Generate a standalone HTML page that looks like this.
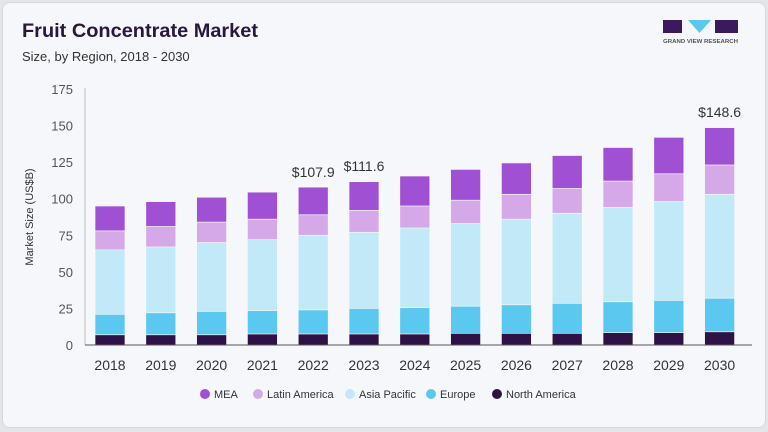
<!DOCTYPE html>
<html><head><meta charset="utf-8"><style>
body{margin:0;background:#e3e5e8;font-family:"Liberation Sans",sans-serif;}
#c{position:absolute;left:2px;top:2px;width:762px;height:424px;background:#f5f7fa;border:1px solid #d5d8dc;border-radius:8px;}
.a{fill:#a050d2}.b{fill:#d5a9e8}.p{fill:#c2e9f8}.e{fill:#5bc8f0}.n{fill:#2e1245}
rect.s{stroke:#f5f7fa;stroke-width:0.7}
.yl{font-size:13px;fill:#555;text-anchor:end}
.xl{font-size:14px;fill:#333;text-anchor:middle}
</style></head><body>
<div id="c"></div>
<svg width="768" height="432" style="position:absolute;left:0;top:0" xmlns="http://www.w3.org/2000/svg">
<text x="22" y="37" font-size="19" font-weight="bold" fill="#2a1640" textLength="236" lengthAdjust="spacingAndGlyphs">Fruit Concentrate Market</text>
<text x="22" y="61" font-size="13" fill="#333">Size, by Region, 2018 - 2030</text>
<rect x="663" y="20" width="19" height="13" fill="#3a1a5c"/>
<polygon points="688,20 711,20 699.5,33" fill="#5bc8f0"/>
<rect x="715" y="20" width="23" height="13" fill="#3a1a5c"/>
<text x="700.5" y="43" font-size="5" font-weight="bold" fill="#555" text-anchor="middle" textLength="75" lengthAdjust="spacingAndGlyphs">GRAND VIEW RESEARCH</text>
<text transform="translate(33,217) rotate(-90)" font-size="11" fill="#333" text-anchor="middle">Market Size (US$B)</text>
<text class="yl" x="73" y="350">0</text><text class="yl" x="73" y="313.4">25</text><text class="yl" x="73" y="276.8">50</text><text class="yl" x="73" y="240.3">75</text><text class="yl" x="73" y="203.7">100</text><text class="yl" x="73" y="167.1">125</text><text class="yl" x="73" y="130.5">150</text><text class="yl" x="73" y="94">175</text>
<line x1="85" y1="88" x2="85" y2="345" stroke="#bbb"/>

<g transform="translate(95,0)"><rect class="a s" y="206.0" width="30" height="139"/><rect class="b s" y="230.9" width="30" height="114.1"/><rect class="p s" y="249.9" width="30" height="95.1"/><rect class="e s" y="314.3" width="30" height="30.7"/><rect class="n s" y="334.8" width="30" height="10.2"/></g>
<g transform="translate(145.8,0)"><rect class="a s" y="201.6" width="30" height="143.4"/><rect class="b s" y="226.5" width="30" height="118.5"/><rect class="p s" y="247.0" width="30" height="98"/><rect class="e s" y="312.8" width="30" height="32.2"/><rect class="n s" y="334.8" width="30" height="10.2"/></g>
<g transform="translate(196.6,0)"><rect class="a s" y="197.2" width="30" height="147.8"/><rect class="b s" y="222.1" width="30" height="122.9"/><rect class="p s" y="242.6" width="30" height="102.4"/><rect class="e s" y="311.4" width="30" height="33.6"/><rect class="n s" y="334.8" width="30" height="10.2"/></g>
<g transform="translate(247.4,0)"><rect class="a s" y="192.1" width="30" height="152.9"/><rect class="b s" y="219.2" width="30" height="125.8"/><rect class="p s" y="239.7" width="30" height="105.3"/><rect class="e s" y="310.6" width="30" height="34.4"/><rect class="n s" y="334.0" width="30" height="11"/></g>
<g transform="translate(298.2,0)"><rect class="a s" y="187.1" width="30" height="157.9"/><rect class="b s" y="214.8" width="30" height="130.2"/><rect class="p s" y="235.3" width="30" height="109.7"/><rect class="e s" y="309.9" width="30" height="35.1"/><rect class="n s" y="334.0" width="30" height="11"/></g>
<g transform="translate(349,0)"><rect class="a s" y="181.7" width="30" height="163.3"/><rect class="b s" y="210.4" width="30" height="134.6"/><rect class="p s" y="232.3" width="30" height="112.7"/><rect class="e s" y="308.4" width="30" height="36.6"/><rect class="n s" y="334.0" width="30" height="11"/></g>
<g transform="translate(399.8,0)"><rect class="a s" y="176.0" width="30" height="169"/><rect class="b s" y="206.0" width="30" height="139"/><rect class="p s" y="228.0" width="30" height="117"/><rect class="e s" y="307.7" width="30" height="37.3"/><rect class="n s" y="334.0" width="30" height="11"/></g>
<g transform="translate(450.6,0)"><rect class="a s" y="169.4" width="30" height="175.6"/><rect class="b s" y="200.2" width="30" height="144.8"/><rect class="p s" y="223.6" width="30" height="121.4"/><rect class="e s" y="306.2" width="30" height="38.8"/><rect class="n s" y="333.3" width="30" height="11.7"/></g>
<g transform="translate(501.4,0)"><rect class="a s" y="162.9" width="30" height="182.1"/><rect class="b s" y="194.3" width="30" height="150.7"/><rect class="p s" y="219.2" width="30" height="125.8"/><rect class="e s" y="304.8" width="30" height="40.2"/><rect class="n s" y="333.3" width="30" height="11.7"/></g>
<g transform="translate(552.2,0)"><rect class="a s" y="155.5" width="30" height="189.5"/><rect class="b s" y="188.5" width="30" height="156.5"/><rect class="p s" y="213.3" width="30" height="131.7"/><rect class="e s" y="303.3" width="30" height="41.7"/><rect class="n s" y="333.3" width="30" height="11.7"/></g>
<g transform="translate(603,0)"><rect class="a s" y="147.5" width="30" height="197.5"/><rect class="b s" y="181.1" width="30" height="163.9"/><rect class="p s" y="207.5" width="30" height="137.5"/><rect class="e s" y="301.8" width="30" height="43.2"/><rect class="n s" y="332.6" width="30" height="12.4"/></g>
<g transform="translate(653.8,0)"><rect class="a s" y="137.3" width="30" height="207.7"/><rect class="b s" y="173.8" width="30" height="171.2"/><rect class="p s" y="201.6" width="30" height="143.4"/><rect class="e s" y="300.4" width="30" height="44.6"/><rect class="n s" y="332.6" width="30" height="12.4"/></g>
<g transform="translate(704.6,0)"><rect class="a s" y="127.6" width="30" height="217.4"/><rect class="b s" y="165.0" width="30" height="180"/><rect class="p s" y="194.3" width="30" height="150.7"/><rect class="e s" y="298.2" width="30" height="46.8"/><rect class="n s" y="331.8" width="30" height="13.2"/></g>

<line x1="85" y1="345" x2="752" y2="345" stroke="#555"/>
<text class="xl" x="110" y="370">2018</text><text class="xl" x="160.8" y="370">2019</text><text class="xl" x="211.6" y="370">2020</text><text class="xl" x="262.4" y="370">2021</text><text class="xl" x="313.2" y="370">2022</text><text class="xl" x="364" y="370">2023</text><text class="xl" x="414.8" y="370">2024</text><text class="xl" x="465.6" y="370">2025</text><text class="xl" x="516.4" y="370">2026</text><text class="xl" x="567.2" y="370">2027</text><text class="xl" x="618" y="370">2028</text><text class="xl" x="668.8" y="370">2029</text><text class="xl" x="719.6" y="370">2030</text>
<text class="xl" x="313.2" y="177" fill="#222">$107.9</text><text class="xl" x="364" y="171" fill="#222">$111.6</text><text class="xl" x="719.6" y="117" fill="#222">$148.6</text>

<circle cx="205" cy="394" r="5" class="a"/><text x="214" y="398" font-size="11" fill="#333">MEA</text>
<circle cx="258" cy="394" r="5" class="b"/><text x="267" y="398" font-size="11" fill="#333">Latin America</text>
<circle cx="350" cy="394" r="5" class="p"/><text x="359" y="398" font-size="11" fill="#333">Asia Pacific</text>
<circle cx="431" cy="394" r="5" class="e"/><text x="440" y="398" font-size="11" fill="#333">Europe</text>
<circle cx="497" cy="394" r="5" class="n"/><text x="506" y="398" font-size="11" fill="#333">North America</text>
</svg>
</body></html>
